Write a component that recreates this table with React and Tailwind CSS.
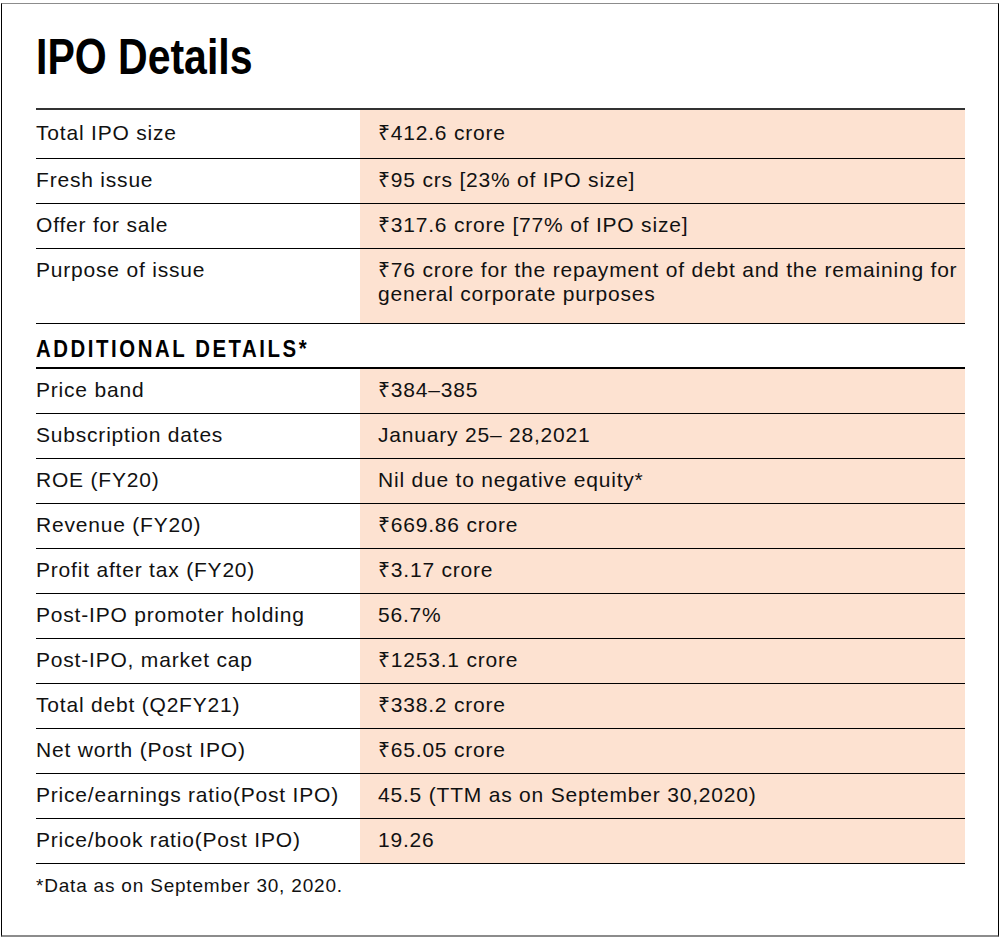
import React from 'react';

const rows = [
    { label: 'Total IPO size', value: '₹412.6 crore', h: 'h-[48px]', pt: 'pt-[11px]' },
    { label: 'Fresh issue', value: '₹95 crs [23% of IPO size]' },
    { label: 'Offer for sale', value: '₹317.6 crore [77% of IPO size]' },
    { label: 'Purpose of issue', value: '₹76 crore for the repayment of debt and the remaining for general corporate purposes', h: 'h-[74px]' },
];

const more = [
    ['Price band', '₹384–385'],
    ['Subscription dates', 'January 25– 28,2021'],
    ['ROE (FY20)', 'Nil due to negative equity*'],
    ['Revenue (FY20)', '₹669.86 crore'],
    ['Profit after tax (FY20)', '₹3.17 crore'],
    ['Post-IPO promoter holding', '56.7%'],
    ['Post-IPO, market cap', '₹1253.1 crore'],
    ['Total debt (Q2FY21)', '₹338.2 crore'],
    ['Net worth (Post IPO)', '₹65.05 crore'],
    ['Price/earnings ratio(Post IPO)', '45.5 (TTM as on September 30,2020)'],
    ['Price/book ratio(Post IPO)', '19.26'],
];

const Row = ({ label, value, h = 'h-[44px]', pt = 'pt-[9px]' }) => (
    <div className="flex border-b border-black">
        <div className={`w-[324px] ${h} ${pt} leading-[24px]`}>{label}</div>
        <div className={`flex-1 ${h} ${pt} pl-[18px] pr-0 bg-[#fde2d1] leading-[24px]`}>{value}</div>
    </div>
);

export default function App() {
    return (
        <div className="bg-white w-[1000px] h-[938px] pt-[3px] pl-px" style={{ fontFamily: '"Liberation Sans", Arial, sans-serif' }}>
            <div className="w-[998px] h-[934px] border-t border-t-[#8c8c8c] border-x border-x-black border-b-2 border-b-[#8c8c8c] pl-[34px] pr-[33px] text-[21px] tracking-[0.8px] text-[#111]">
                <div className="pt-[28px] h-[78px]">
                    <h1 className="inline-block origin-left scale-x-[0.82] text-[50px] leading-[50px] font-bold tracking-normal text-black whitespace-nowrap">IPO Details</h1>
                </div>

                <div className="mt-[26px] border-t-2 border-[#333]">
                    {rows.map(r => <Row key={r.label} {...r} />)}

                    <div className="h-[45px] pt-[10px] border-b-2 border-black">
                        <div className="inline-block origin-left scale-x-[0.85] text-[24px] leading-[26px] font-bold tracking-[3px] text-black whitespace-nowrap">ADDITIONAL DETAILS*</div>
                    </div>

                    {more.map(([label, value]) => <Row key={label} label={label} value={value} />)}
                </div>

                <p className="pt-[10px] text-[19px] leading-[24px]">*Data as on September 30, 2020.</p>
            </div>
        </div>
    );
}
